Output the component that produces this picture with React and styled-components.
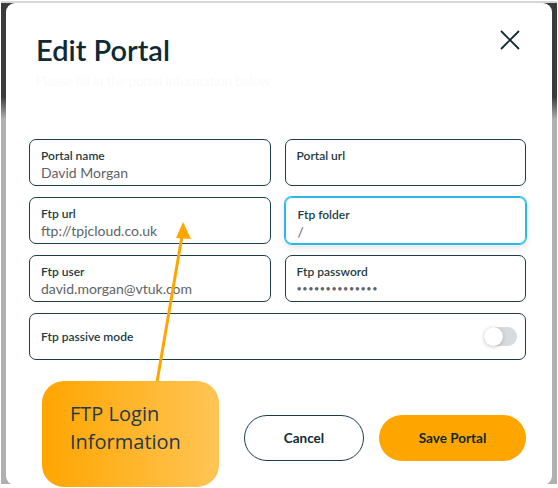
import React from 'react';
import styled, { createGlobalStyle } from 'styled-components';

const GlobalStyle = createGlobalStyle`
  html, body {
    margin: 0;
    padding: 0;
    background: #ffffff;
  }
  body {
    font-family: Lato, "Noto Sans", sans-serif;
  }
`;

const Screen = styled.div`
  position: relative;
  width: 558px;
  height: 488px;
  overflow: hidden;
  background: #ffffff;
`;

// 背後的遮罩
const Backdrop = styled.div`
  margin: 1px 1px 0 1px;
  height: 483px;
  padding: 2px 5px 0 5px;
  box-sizing: border-box;
  background: linear-gradient(#d6d6d6 0 2px, #3b3b3b 2px 96px, #b0b0b0 118px);
`;

const Modal = styled.div`
  height: 482px;
  background: #ffffff;
  border-radius: 9px;
  padding: 0 26px 0 23px;
  box-sizing: border-box;
  display: flex;
  flex-direction: column;
`;

const Header = styled.div`
  display: flex;
  justify-content: space-between;
  align-items: flex-start;
  padding: 27px 5px 0 7px;
`;

const Title = styled.h1`
  margin: 0;
  font-family: Lato, sans-serif;
  font-size: 29px;
  font-weight: 600;
  color: #0e2a35;
  line-height: 40px;
`;

const CloseButton = styled.button`
  border: none;
  background: none;
  padding: 0;
  margin-top: -1px;
  width: 22px;
  height: 22px;
  cursor: pointer;
  color: #0e2a35;
`;

const Subtitle = styled.p`
  margin: 3px 0 0 7px;
  font-size: 13px;
  color: #f9fafa;
`;

const FieldGrid = styled.div`
  display: grid;
  grid-template-columns: 1fr 1fr;
  column-gap: 14px;
  row-gap: 11px;
  margin-top: 50px;
`;

const Field = styled.div`
  height: 47px;
  box-sizing: border-box;
  border: 1px solid ${(p) => (p.$focused ? '#2bb8e8' : '#1d3d47')};
  border-radius: 7px;
  padding: ${(p) => (p.$focused ? '9px 12px 0' : '8px 11px 0')};
  box-shadow: ${(p) => (p.$focused ? '0 0 0 1px #2bb8e8, 0 3px 8px rgba(0,0,0,0.12)' : 'none')};
  display: flex;
  flex-direction: column;
  gap: 1px;
`;

const Label = styled.span`
  font-size: 12px;
  font-weight: 600;
  color: #1d3b44;
  line-height: 15px;
`;

const Value = styled.span`
  font-size: ${(p) => (p.$secret ? '9px' : '14px')};
  color: #606366;
  line-height: 18px;
  letter-spacing: ${(p) => (p.$secret ? '0.6px' : '0')};
`;

const ToggleRow = styled.div`
  grid-column: 1 / -1;
  height: 47px;
  box-sizing: border-box;
  border: 1px solid #1d3d47;
  border-radius: 7px;
  padding: 0 8px 0 11px;
  display: flex;
  align-items: center;
  justify-content: space-between;
`;

const ToggleLabel = styled.span`
  font-size: 12px;
  font-weight: 600;
  color: #1d3b44;
`;

const Switch = styled.div`
  width: 33px;
  height: 19px;
  border-radius: 10px;
  background: #d7dbde;
  position: relative;
`;

const Knob = styled.div`
  position: absolute;
  left: 0;
  top: 0;
  width: 19px;
  height: 19px;
  border-radius: 50%;
  background: #ffffff;
  box-shadow: 0 1px 4px rgba(0, 0, 0, 0.22);
`;

const Footer = styled.div`
  display: flex;
  justify-content: flex-end;
  gap: 15px;
  margin-top: 55px;
`;

const Button = styled.button`
  height: 46px;
  width: ${(p) => p.$width}px;
  border-radius: 23px;
  font-family: Lato, sans-serif;
  font-size: 13.5px;
  font-weight: 700;
  color: #0e2a35;
  cursor: pointer;
  box-sizing: border-box;
  border: ${(p) => (p.$primary ? 'none' : '1.5px solid #1d3d47')};
  background: ${(p) => (p.$primary ? '#ffa500' : '#ffffff')};
`;

// 註解用的橘色框
const Callout = styled.div`
  position: absolute;
  left: 42px;
  top: 381px;
  width: 177px;
  height: 106px;
  border-radius: 22px;
  background: linear-gradient(90deg, #ffa500, #ffc555);
  box-sizing: border-box;
  padding: 19px 0 0 28px;
  font-family: "Open Sans", "Noto Sans", sans-serif;
  font-size: 20px;
  line-height: 28px;
  color: #1f3a4c;
`;

const Arrow = styled.svg`
  position: absolute;
  left: 0;
  top: 0;
  pointer-events: none;
`;

const fields = [
  { label: 'Portal name', value: 'David Morgan' },
  { label: 'Portal url', value: '' },
  { label: 'Ftp url', value: 'ftp://tpjcloud.co.uk' },
  { label: 'Ftp folder', value: '/', focused: true },
  { label: 'Ftp user', value: 'david.morgan@vtuk.com' },
  { label: 'Ftp password', value: '••••••••••••••', secret: true },
];

export default function App() {
  return (
    <Screen>
      <GlobalStyle />
      <Backdrop>
        <Modal>
          <Header>
            <Title>Edit Portal</Title>
            <CloseButton aria-label="Close">
              <svg width="22" height="22" viewBox="0 0 22 22">
                <path d="M2 2 L20 20 M20 2 L2 20" stroke="currentColor" strokeWidth="1.8" />
              </svg>
            </CloseButton>
          </Header>
          <Subtitle>Please fill in the portal information below</Subtitle>
          <FieldGrid>
            {fields.map((f) => (
              <Field key={f.label} $focused={f.focused}>
                <Label>{f.label}</Label>
                <Value $secret={f.secret}>{f.value}</Value>
              </Field>
            ))}
            <ToggleRow>
              <ToggleLabel>Ftp passive mode</ToggleLabel>
              <Switch>
                <Knob />
              </Switch>
            </ToggleRow>
          </FieldGrid>
          <Footer>
            <Button $width={120}>Cancel</Button>
            <Button $primary $width={147}>Save Portal</Button>
          </Footer>
        </Modal>
      </Backdrop>
      <Arrow width="558" height="488">
        <line x1="157" y1="382" x2="182" y2="236" stroke="#ffa500" strokeWidth="3" />
        <polygon points="183,222 176,238 191,239" fill="#ffa500" />
      </Arrow>
      <Callout>
        FTP Login
        <br />
        Information
      </Callout>
    </Screen>
  );
}
